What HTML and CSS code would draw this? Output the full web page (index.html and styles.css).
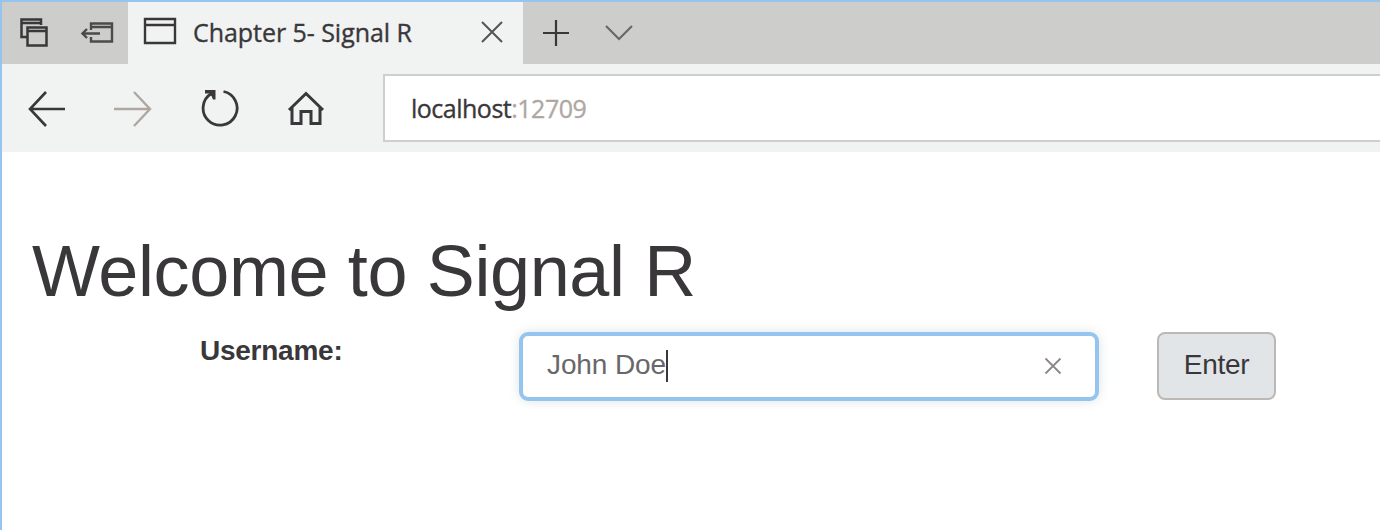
FILE: index.html
```html
<!DOCTYPE html>
<html lang="en">
<head>
<meta charset="utf-8">
<title>Chapter 5- Signal R</title>
<link rel="stylesheet" href="styles.css">
</head>
<body>
<div class="window">
  <header class="tabs">
    <div class="tab-tools">
      <svg class="icon-stack" width="30" height="32" viewBox="0 0 30 32"><g fill="none" stroke="#39373a" stroke-width="2.500"><path d="M8 20H2.500V2.500h19.500V8M2 6h20"/><path fill="#cdcdcb" d="M8.500 10.500h19v18h-19z"/><path d="M8 14h20"/></g></svg>
      <svg class="icon-aside" width="34" height="24" viewBox="0 0 34 24"><g fill="none" stroke="#4d4a4c" stroke-width="2.400"><path d="M11 9V2.500h21v18H11V16M11 6h21M2 12.500h18"/><path d="M7 8l-4.500 4.500L7 17"/></g></svg>
    </div>
    <div class="tab">
      <svg width="34" height="28" viewBox="0 0 34 28"><path d="M2 2h30v24H2zM2 8h30" fill="none" stroke="#39373a" stroke-width="2.400"/></svg>
      <span class="tab-title">Chapter 5- Signal R</span>
      <svg class="tab-close" width="22" height="22" viewBox="0 0 22 22"><path d="M1 1l20 20M21 1L1 21" fill="none" stroke="#555254" stroke-width="2"/></svg>
    </div>
    <svg class="new-tab" width="28" height="28" viewBox="0 0 28 28"><path d="M14 1v26M1 14h26" fill="none" stroke="#39373a" stroke-width="2.200"/></svg>
    <svg class="chevron" width="28" height="16" viewBox="0 0 28 16"><path d="M1 1l13 13L27 1" fill="none" stroke="#69676a" stroke-width="2.200"/></svg>
  </header>
  <nav class="toolbar">
    <div class="nav-icons">
      <svg width="40" height="38" viewBox="0 0 40 38"><path d="M20 2L4 19l16 17M4 19h35" fill="none" stroke="#39373a" stroke-width="2.600"/></svg>
      <svg width="40" height="38" viewBox="0 0 40 38"><path d="M21 2l16 17-16 17M37 19H1" fill="none" stroke="#b0a7a2" stroke-width="2.400"/></svg>
      <svg width="40" height="40" viewBox="0 0 40 40"><path d="M23.500 1.500a17 17 0 1 1-12 2" fill="none" stroke="#39373a" stroke-width="2.800"/><path d="M5 0h10.500v9.500H13L11.500 6 9 3.500H5z" fill="#39373a"/></svg>
      <svg width="38" height="38" viewBox="0 0 38 38"><path d="M2 20L19 3.500l17 16.500M5 17v16.500h9V21.500h10v12h9V17" fill="none" stroke="#39373a" stroke-width="3"/></svg>
    </div>
    <div class="address"><span class="host">localhost<span class="port">:12709</span></span></div>
  </nav>
  <main>
    <h1>Welcome to Signal R</h1>
    <div class="form">
      <label>Username:</label>
      <div class="field"><span class="value">John Doe</span><span class="caret"></span>
        <svg class="clear" width="18" height="18" viewBox="0 0 18 18"><path d="M1.500 1.500l15 15M16.500 1.500l-15 15" fill="none" stroke="#8c8785" stroke-width="1.800"/></svg>
      </div>
      <button type="button">Enter</button>
    </div>
  </main>
</div>
</body>
</html>
```
FILE: styles.css
```css
* { box-sizing: border-box; }
body { margin: 0; background: #fff; font-family: "Liberation Sans", Arial, sans-serif; color: #39373a; }
svg { display: block; flex: none; }
.window { height: 530px; border: solid #95c5ee; border-width: 2px 0 0 2px; overflow: hidden; }
.tabs { display: flex; height: 62px; background: #cdcdcb; }
.tab-tools { display: flex; width: 126px; padding: 15px 0 0 17px; }
.icon-aside { margin: 4px 0 0 31px; }
.tab { display: flex; width: 395px; height: 62px; padding: 15px 0 0 15px; background: #f1f3f2; }
.tab-title, .host { font-family: "Open Sans", "Noto Sans", sans-serif; font-size: 25px; line-height: 34px; white-space: nowrap; -webkit-text-stroke: 0.350px currentColor; }
.tab-title { width: 220px; margin: -2px 0 0 16px; letter-spacing: -0.050px; }
.tab-close { margin: 4px 0 0 68px; }
.new-tab { margin: 17px 0 0 19px; }
.chevron { margin: 23px 0 0 35px; }
.toolbar { display: flex; height: 88px; padding-top: 10px; background: #f1f3f2; }
.nav-icons { display: flex; width: 381px; padding: 16px 0 0 24px; gap: 47px; align-items: flex-start; }
.address { flex: 1; height: 68px; border: 2px solid #cdcecd; border-right: 0; background: #fff; padding: 15px 0 0 26px; }
.host { display: block; letter-spacing: -0.500px; }
.port { color: #b0a7a2; }
main { padding: 79px 0 0 30px; }
h1 { margin: 0; font-size: 72px; font-weight: 400; line-height: 80px; height: 101px; white-space: nowrap; letter-spacing: -0.370px; }
.form { display: grid; grid-template-columns: 487px 580px 119px; column-gap: 0; align-items: start; }
label { padding: 1px 0 0 168px; font-size: 28px; line-height: 36px; font-weight: 700; letter-spacing: -0.250px; }
.field { display: flex; height: 69px; border: 4px solid #95c5ee; border-radius: 9px; box-shadow: 0 0 12px #dfe2e4; padding: 13px 25px 0 24px; font-size: 28px; line-height: 32px; color: #69676a; }
.value { letter-spacing: -0.120px; }
.caret { width: 2px; height: 32px; background: #39373a; margin-top: 1px; }
.clear { margin: 8px 8px 0 auto; }
button { width: 119px; height: 68px; margin-left: 58px; padding: 0 0 3px; border: 2px solid #bdb8b3; border-radius: 8px; background: #e2e5e7; color: #39373a; font: 28px/32px "Liberation Sans", Arial, sans-serif; letter-spacing: -0.300px; }
```
